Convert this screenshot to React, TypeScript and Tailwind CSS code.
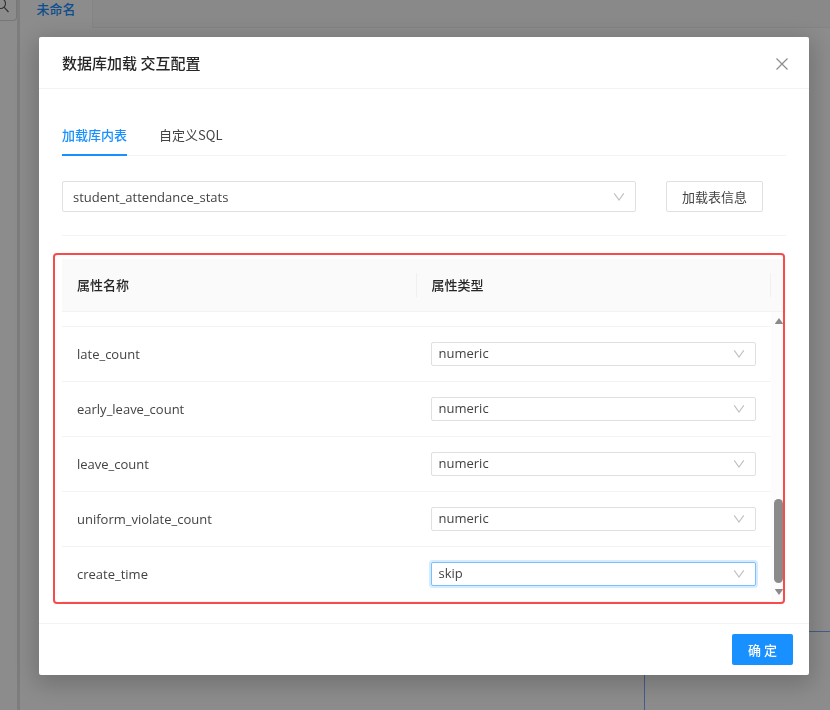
import React, { useState } from 'react';
import clsx from 'clsx';

interface Field {
  name: string;
  type: string;
}

const INITIAL_FIELDS: Field[] = [
  { name: 'late_count', type: 'numeric' },
  { name: 'early_leave_count', type: 'numeric' },
  { name: 'leave_count', type: 'numeric' },
  { name: 'uniform_violate_count', type: 'numeric' },
  { name: 'create_time', type: 'skip' },
];

const TABS = ['加载库内表', '自定义SQL'];

function Chevron({ className }: { className: string }) {
  return (
    <svg
      viewBox="0 0 12 12"
      fill="none"
      stroke="#bfbfbf"
      strokeWidth="1.1"
      className={clsx('pointer-events-none absolute top-1/2 h-3 w-3 -translate-y-1/2', className)}
    >
      <path d="M1.2 2.4 6 9l4.800-6.600" />
    </svg>
  );
}

function Workspace() {
  return (
    <div className="flex min-h-screen bg-white">
      <aside className="w-[17px] shrink-0 overflow-hidden">
        <div className="flex h-[21px] items-start justify-end rounded-br-sm border-r border-b border-[#d9d9d9] pr-[7px]">
          <svg viewBox="0 0 14 14" fill="none" stroke="#595959" strokeWidth="1.1" className="h-3.5 w-3.5 shrink-0">
            <circle cx="5.500" cy="3.500" r="5" />
            <path d="M9 7.200 13.500 12" />
          </svg>
        </div>
      </aside>
      <div className="w-[3px] shrink-0 bg-[#e4e4e4]" />
      <main className="relative flex-1 overflow-hidden">
        <div className="flex h-7">
          <div className="flex w-[72px] items-start justify-center text-[13px] leading-[18px] font-medium text-[#1890ff]">
            未命名
          </div>
          <div className="flex-1 border-b border-l border-[#f0f0f0] bg-[#fafafa]" />
        </div>
        {/* selected canvas node */}
        <div className="absolute top-[631px] left-[624px] h-60 w-80 border border-[#7daaff]" />
      </main>
    </div>
  );
}

function App() {
  const [tab, setTab] = useState(TABS[0]);
  const [table, setTable] = useState('student_attendance_stats');
  const [fields, setFields] = useState(INITIAL_FIELDS);

  const updateType = (name: string, type: string) => {
    setFields(fields.map((f) => (f.name === name ? { ...f, type } : f)));
  };

  return (
    <div className="font-['Noto_Sans_CJK_SC',sans-serif] text-[13px] text-[#434343]">
      <Workspace />

      <div className="fixed inset-0 overflow-hidden bg-black/45 pt-[37px] pr-[21px] pl-[39px]">
        <div
          role="dialog"
          aria-labelledby="dialog-title"
          className="rounded-xs bg-white shadow-[0_6px_24px_4px_rgba(0,0,0,0.2)]"
        >
          {/* Header */}
          <header className="flex h-[52px] items-center justify-between border-b border-[#f3f3f3] pt-0.5 pr-5 pl-[23px]">
            <h1 id="dialog-title" className="text-[15px] font-medium text-[#262626]">数据库加载 交互配置</h1>
            <button type="button" aria-label="关闭" className="p-px">
              <svg viewBox="0 0 12 12" fill="none" stroke="#8c8c8c" strokeWidth="1.2" className="h-3 w-3">
                <path d="M.5.5l11 11M11.500.5l-11 11" />
              </svg>
            </button>
          </header>

          <div className="px-[23px] pt-6 pb-[21px]">
            {/* Tabs */}
            <div role="tablist" className="flex h-[43px] gap-8 border-b border-[#f3f3f3]">
              {TABS.map((t) => (
                <button
                  key={t}
                  type="button"
                  role="tab"
                  aria-selected={t === tab}
                  onClick={() => setTab(t)}
                  className={clsx(
                    '-mb-px border-b-2 pt-0.5',
                    t === tab ? 'border-[#1890ff] font-medium text-[#1890ff]' : 'border-transparent',
                  )}
                >
                  {t}
                </button>
              ))}
            </div>

            {/* Table picker */}
            <div className="flex gap-[30px] border-b border-[#f3f3f3] pt-[25px] pr-[23px] pb-[23px]">
              <div className="relative flex-1">
                <select
                  aria-label="数据表"
                  value={table}
                  onChange={(e) => setTable(e.target.value)}
                  className="block h-[31px] w-full appearance-none rounded-xs border border-[#e0e0e0] bg-white px-2.5 pt-0.5 font-['Open_Sans',sans-serif] outline-none"
                >
                  <option>student_attendance_stats</option>
                </select>
                <Chevron className="right-[11px]" />
              </div>
              <button type="button" className="h-[31px] rounded-xs border border-[#e0e0e0] px-[15px]">
                加载表信息
              </button>
            </div>

            {/* Fields */}
            <div className="relative mt-[23px]">
              <div className="flex h-[53px] items-center border-b border-[#f3f3f3] bg-[#fafafa] font-medium text-[#262626]">
                <div className="flex h-6 flex-1 items-center border-r border-[#f0f0f0] pl-[15px]">属性名称</div>
                <div className="flex h-6 flex-1 items-center border-r border-[#f0f0f0] pl-[15px]">属性类型</div>
                <div className="w-[15px]" />
              </div>
              <div className="flex">
                <div className="flex-1 pt-[14px]">
                  <table className="w-full table-fixed border-t border-[#f3f3f3] font-['Open_Sans',sans-serif]">
                    <tbody>
                      {fields.map((f) => (
                        <tr key={f.name} className="h-[55px] border-b border-[#f3f3f3]">
                          <td className="pt-0.5 pl-[15px]">
                            <label htmlFor={f.name}>{f.name}</label>
                          </td>
                          <td className="pr-[15px] pl-[14px]">
                            <div className="relative">
                              <select
                                id={f.name}
                                value={f.type}
                                onChange={(e) => updateType(f.name, e.target.value)}
                                className={clsx(
                                  'block h-6 w-full appearance-none rounded-xs border bg-white px-[7px] outline-none',
                                  f.type === 'skip'
                                    ? 'border-[#7cc0fb] shadow-[0_0_0_2px_rgba(24,144,255,0.18)]'
                                    : 'border-[#e0e0e0]',
                                )}
                              >
                                <option>numeric</option>
                                <option>skip</option>
                              </select>
                              <Chevron className="right-[11px]" />
                            </div>
                          </td>
                        </tr>
                      ))}
                    </tbody>
                  </table>
                </div>
                {/* Scrollbar */}
                <div className="flex w-[15px] flex-col items-center bg-[#fcfcfc] pt-1.5 pb-[7px]">
                  <svg viewBox="0 0 8 6" className="h-1.5 w-2" fill="#8a8a8a">
                    <path d="M4 0 8 5.500Q8 6 7.500 6h-7Q0 6 0 5.500z" />
                  </svg>
                  <div className="mt-auto h-[84px] w-[9px] rounded-full bg-[#8a8a8a]" />
                  <svg viewBox="0 0 8 6" className="mt-1.5 h-1.5 w-2" fill="#8a8a8a">
                    <path d="M4 6 0 .5Q0 0 .5 0h7Q8 0 8 .5z" />
                  </svg>
                </div>
              </div>
              <div className="pointer-events-none absolute -top-1.5 right-px -bottom-0.5 -left-[9px] rounded border-2 border-[#f84b4b]" />
            </div>
          </div>

          {/* Footer */}
          <footer className="flex justify-end border-t border-[#f3f3f3] py-2.5 pr-4">
            <button type="button" className="h-[31px] rounded-xs bg-[#1890ff] px-4 font-medium text-white">
              确 定
            </button>
          </footer>
        </div>
      </div>
    </div>
  );
}

export default App;
